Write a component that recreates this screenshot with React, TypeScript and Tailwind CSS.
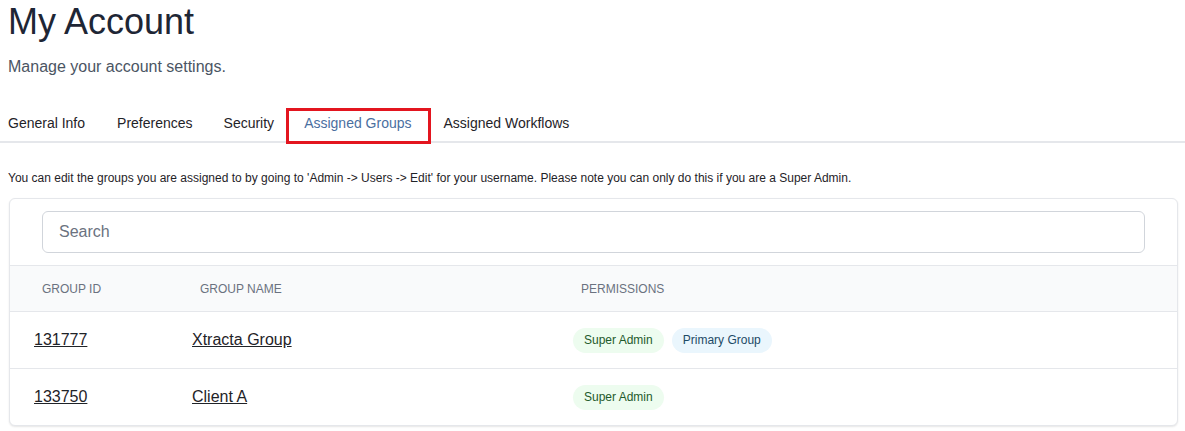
import React from "react";

const tabs = [
  "General Info",
  "Preferences",
  "Security",
  "Assigned Groups",
  "Assigned Workflows",
];

type Group = {
  id: string;
  name: string;
  perms: { label: string; tone: "green" | "blue" }[];
};

const groups: Group[] = [
  {
    id: "131777",
    name: "Xtracta Group",
    perms: [
      { label: "Super Admin", tone: "green" },
      { label: "Primary Group", tone: "blue" },
    ],
  },
  {
    id: "133750",
    name: "Client A",
    perms: [{ label: "Super Admin", tone: "green" }],
  },
];

function Badge({ label, tone }: { label: string; tone: "green" | "blue" }) {
  const cls =
    tone === "green"
      ? "bg-[#edfcef] text-[#1f5a2c]"
      : "bg-[#eaf6fd] text-[#1d4a66]";
  return (
    <span
      className={`inline-flex h-[25px] items-center rounded-full px-[11px] text-[12px] leading-4 ${cls}`}
    >
      {label}
    </span>
  );
}

export default function App() {
  return (
    <div
      className="min-h-screen bg-white text-[#1f2937]"
      style={{ fontFamily: '"Liberation Sans", Arial, sans-serif' }}
    >
      <div className="pt-[2px]">
        <h1 className="px-2 text-[36px] leading-[40px] text-[#1e2635]">
          My Account
        </h1>
        <p className="mt-[13px] px-2 text-[16px] leading-6 text-[#4b5563]">
          Manage your account settings.
        </p>

        <div className="mt-[32px] flex border-b-2 border-[#e5e7eb] pl-2">
          {tabs.map((t, i) => {
            const active = t === "Assigned Groups";
            return (
              <div
                key={t}
                className={`pt-[2px] pb-[8px] text-[14px] leading-5 ${
                  i === 0 ? "pr-4" : i === 3 ? "pl-[15px] pr-4" : i === 2 ? "px-[15px]" : "px-4"
                } ${
                  active
                    ? "text-[#4a6f9f] outline-[3px] outline-solid outline-[#e3151f]"
                    : "text-[#1f2328]"
                }`}
              >
                {t}
              </div>
            );
          })}
        </div>

        <p className="mt-[27px] px-2 text-[12px] leading-4 text-[#1f2328]">
          You can edit the groups you are assigned to by going to 'Admin -&gt;
          Users -&gt; Edit' for your username. Please note you can only do this
          if you are a Super Admin.
        </p>

        <div className="mt-3 pl-[9px] pr-[7px]">
          <div className="overflow-hidden rounded-md border border-[#e5e7eb] bg-white shadow-[0_1px_2px_rgba(0,0,0,0.1)]">
            <div className="px-8 pt-3 pb-3">
              <div className="rounded-md border border-[#d1d5db] px-4 py-2 text-[16px] leading-6 text-[#6b7280]">
                Search
              </div>
            </div>

            <div className="grid grid-cols-[158px_381px_1fr] border-y border-[#e5e7eb] bg-[#f9fafb] text-[12px] leading-4 text-[#6b7280]">
              <div className="px-8 pt-[15px] pb-[14px]">GROUP ID</div>
              <div className="px-8 pt-[15px] pb-[14px]">GROUP NAME</div>
              <div className="px-8 pt-[15px] pb-[14px]">PERMISSIONS</div>
            </div>

            {groups.map((g, i) => (
              <div
                key={g.id}
                className={`grid grid-cols-[158px_381px_1fr] items-center ${
                  i < groups.length - 1 ? "border-b border-[#e5e7eb]" : ""
                }`}
              >
                <div className="px-6 py-4 text-[16px] leading-6">
                  <a href="#" className="text-[#1f2328] underline">
                    {g.id}
                  </a>
                </div>
                <div className="px-6 py-4 text-[16px] leading-6">
                  <a href="#" className="text-[#1f2328] underline">
                    {g.name}
                  </a>
                </div>
                <div className="flex items-center gap-2 px-6">
                  {g.perms.map((p) => (
                    <Badge key={p.label} label={p.label} tone={p.tone} />
                  ))}
                </div>
              </div>
            ))}
          </div>
        </div>
      </div>
    </div>
  );
}
